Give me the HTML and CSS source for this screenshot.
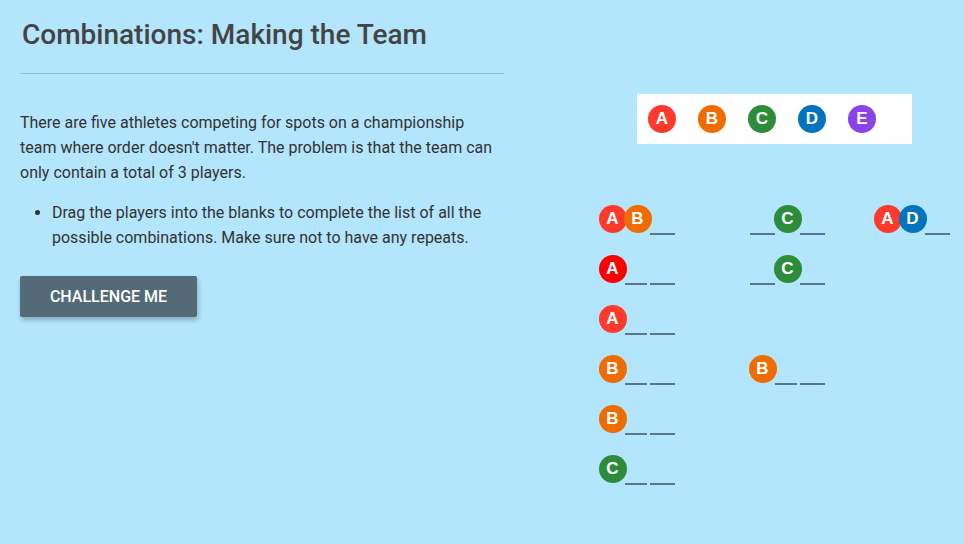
FILE: index.html
```html
<!DOCTYPE html>
<html lang="en">
<head>
  <meta charset="UTF-8">
  <meta name="viewport" content="width=device-width, initial-scale=1.0">
  <title>Combinations: Making the Team</title>
  <link rel="stylesheet" href="styles.css">
</head>
<body>
  <div class="page">
    <div class="intro">
      <h1>Combinations: Making the Team</h1>
      <hr class="rule">
      <p>There are five athletes competing for spots on a championship team where order doesn't matter. The problem is that the team can only contain a total of 3 players.</p>
      <ul>
        <li>Drag the players into the blanks to complete the list of all the possible combinations. Make sure not to have any repeats.</li>
      </ul>
      <button class="challenge-button">Challenge Me</button>
    </div>

    <div class="board">
      <div class="pool">
        <div class="chip a">A</div>
        <div class="chip b">B</div>
        <div class="chip c">C</div>
        <div class="chip d">D</div>
        <div class="chip e">E</div>
      </div>

      <div class="combos">
        <!-- row 1 -->
        <div class="combo">
          <div class="slot"><div class="chip a">A</div></div>
          <div class="slot"><div class="chip b">B</div></div>
          <div class="slot blank"></div>
        </div>
        <div class="combo">
          <div class="slot blank"></div>
          <div class="slot"><div class="chip c">C</div></div>
          <div class="slot blank"></div>
        </div>
        <div class="combo">
          <div class="slot"><div class="chip a">A</div></div>
          <div class="slot"><div class="chip d">D</div></div>
          <div class="slot blank"></div>
        </div>

        <!-- row 2 -->
        <div class="combo">
          <div class="slot"><div class="chip a red">A</div></div>
          <div class="slot blank"></div>
          <div class="slot blank"></div>
        </div>
        <div class="combo">
          <div class="slot blank"></div>
          <div class="slot"><div class="chip c">C</div></div>
          <div class="slot blank"></div>
        </div>
        <div class="combo"></div>

        <!-- row 3 -->
        <div class="combo">
          <div class="slot"><div class="chip a">A</div></div>
          <div class="slot blank"></div>
          <div class="slot blank"></div>
        </div>
        <div class="combo"></div>
        <div class="combo"></div>

        <!-- row 4 -->
        <div class="combo">
          <div class="slot"><div class="chip b">B</div></div>
          <div class="slot blank"></div>
          <div class="slot blank"></div>
        </div>
        <div class="combo">
          <div class="slot"><div class="chip b">B</div></div>
          <div class="slot blank"></div>
          <div class="slot blank"></div>
        </div>
        <div class="combo"></div>

        <!-- row 5 -->
        <div class="combo">
          <div class="slot"><div class="chip b">B</div></div>
          <div class="slot blank"></div>
          <div class="slot blank"></div>
        </div>
        <div class="combo"></div>
        <div class="combo"></div>

        <!-- row 6 -->
        <div class="combo">
          <div class="slot"><div class="chip c">C</div></div>
          <div class="slot blank"></div>
          <div class="slot blank"></div>
        </div>
        <div class="combo"></div>
        <div class="combo"></div>
      </div>
    </div>
  </div>
</body>
</html>
```

FILE: styles.css
```css
body {
  margin: 0;
  background: #b3e5fc;
  font-family: Roboto, 'Noto Sans', sans-serif;
  color: #333;
  overflow: hidden;
}
.page {
  display: flex;
  align-items: flex-start;
}
.intro {
  flex-shrink: 0;
  width: 484px;
  margin-left: 20px;
  padding-top: 19px;
}
h1 {
  margin: 0 0 0 2px;
  font-size: 28px;
  line-height: 32px;
  font-weight: 500;
  color: #444;
}
.rule {
  margin: 22px 0 0;
  border: none;
  border-top: 1px solid #8fc2d9;
}
.intro p {
  margin: 36px 0 0;
  font-size: 16px;
  line-height: 25px;
}
.intro ul {
  margin: 15px 0 0;
  padding-left: 32px;
  font-size: 16px;
  line-height: 25px;
}
.challenge-button {
  display: block;
  margin-top: 26px;
  width: 177px;
  height: 41px;
  padding: 0;
  border: none;
  border-radius: 2px;
  background: #546a76;
  color: #fff;
  font-family: Roboto, sans-serif;
  font-size: 16px;
  font-weight: 500;
  text-transform: uppercase;
  box-shadow: 1px 3px 5px rgba(0,0,0,0.25);
  cursor: pointer;
}

.board {
  flex-shrink: 0;
  margin-left: 96px;
  padding-top: 94px;
}
.pool {
  display: flex;
  width: 275px;
  height: 50px;
  margin-left: 37px;
  background: #fff;
}
.pool .chip {
  margin: 11px;
}
.chip {
  width: 28px;
  height: 28px;
  border-radius: 50%;
  color: #fff;
  font-family: 'Liberation Sans', Arial, sans-serif;
  font-size: 17px;
  font-weight: 700;
  line-height: 28px;
  text-align: center;
  flex-shrink: 0;
}
.chip.a { background: #fe3a2c; }
.chip.a.red { background: #ff0000; }
.chip.b { background: #ef6c00; }
.chip.c { background: #2c8c3a; }
.chip.d { background: #0274bd; }
.chip.e { background: #8a43e6; }

.combos {
  display: grid;
  grid-template-columns: 150px 125px 100px;
  grid-auto-rows: 50px;
  margin-top: 61px;
}
.combo {
  display: flex;
}
.slot {
  width: 25px;
  height: 30px;
}
.slot .chip {
  margin-left: -1.5px;
}
.slot.blank {
  box-sizing: border-box;
  border-bottom: 2px solid #5a7684;
}
.slot.blank:nth-child(2) {
  width: 22px;
  margin-right: 3px;
}
```
